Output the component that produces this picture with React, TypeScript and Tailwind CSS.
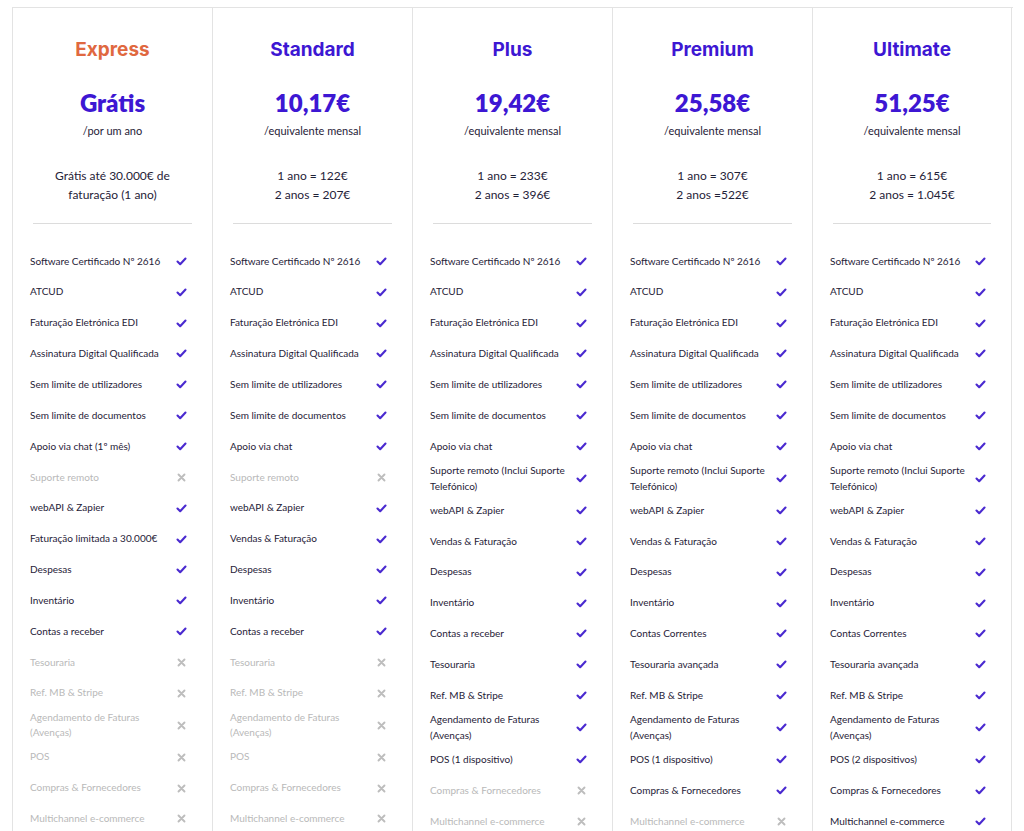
const base = [
  "Software Certificado Nº 2616",
  "ATCUD",
  "Faturação Eletrónica EDI",
  "Assinatura Digital Qualificada",
  "Sem limite de utilizadores",
  "Sem limite de documentos",
];

type Feature = [string, boolean];

const on = (names: string[]): Feature[] => names.map((n) => [n, true]);

const plans = [
  {
    name: "Express",
    orange: true,
    price: "Grátis",
    period: "/por um ano",
    lines: ["Grátis até 30.000€ de", "faturação (1 ano)"],
    features: [
      ...on(base),
      ["Apoio via chat (1º mês)", true],
      ["Suporte remoto", false],
      ["webAPI & Zapier", true],
      ["Faturação limitada a 30.000€", true],
      ["Despesas", true],
      ["Inventário", true],
      ["Contas a receber", true],
      ["Tesouraria", false],
      ["Ref. MB & Stripe", false],
      ["Agendamento de Faturas (Avenças)", false],
      ["POS", false],
      ["Compras & Fornecedores", false],
      ["Multichannel e-commerce", false],
    ] as Feature[],
  },
  {
    name: "Standard",
    price: "10,17€",
    period: "/equivalente mensal",
    lines: ["1 ano = 122€", "2 anos = 207€"],
    features: [
      ...on(base),
      ["Apoio via chat", true],
      ["Suporte remoto", false],
      ["webAPI & Zapier", true],
      ["Vendas & Faturação", true],
      ["Despesas", true],
      ["Inventário", true],
      ["Contas a receber", true],
      ["Tesouraria", false],
      ["Ref. MB & Stripe", false],
      ["Agendamento de Faturas (Avenças)", false],
      ["POS", false],
      ["Compras & Fornecedores", false],
      ["Multichannel e-commerce", false],
    ] as Feature[],
  },
  {
    name: "Plus",
    price: "19,42€",
    period: "/equivalente mensal",
    lines: ["1 ano = 233€", "2 anos = 396€"],
    features: [
      ...on(base),
      ["Apoio via chat", true],
      ["Suporte remoto (Inclui Suporte Telefónico)", true],
      ["webAPI & Zapier", true],
      ["Vendas & Faturação", true],
      ["Despesas", true],
      ["Inventário", true],
      ["Contas a receber", true],
      ["Tesouraria", true],
      ["Ref. MB & Stripe", true],
      ["Agendamento de Faturas (Avenças)", true],
      ["POS (1 dispositivo)", true],
      ["Compras & Fornecedores", false],
      ["Multichannel e-commerce", false],
    ] as Feature[],
  },
  {
    name: "Premium",
    price: "25,58€",
    period: "/equivalente mensal",
    lines: ["1 ano = 307€", "2 anos =522€"],
    features: [
      ...on(base),
      ["Apoio via chat", true],
      ["Suporte remoto (Inclui Suporte Telefónico)", true],
      ["webAPI & Zapier", true],
      ["Vendas & Faturação", true],
      ["Despesas", true],
      ["Inventário", true],
      ["Contas Correntes", true],
      ["Tesouraria avançada", true],
      ["Ref. MB & Stripe", true],
      ["Agendamento de Faturas (Avenças)", true],
      ["POS (1 dispositivo)", true],
      ["Compras & Fornecedores", true],
      ["Multichannel e-commerce", false],
    ] as Feature[],
  },
  {
    name: "Ultimate",
    price: "51,25€",
    period: "/equivalente mensal",
    lines: ["1 ano = 615€", "2 anos = 1.045€"],
    features: [
      ...on(base),
      ["Apoio via chat", true],
      ["Suporte remoto (Inclui Suporte Telefónico)", true],
      ["webAPI & Zapier", true],
      ["Vendas & Faturação", true],
      ["Despesas", true],
      ["Inventário", true],
      ["Contas Correntes", true],
      ["Tesouraria avançada", true],
      ["Ref. MB & Stripe", true],
      ["Agendamento de Faturas (Avenças)", true],
      ["POS (2 dispositivos)", true],
      ["Compras & Fornecedores", true],
      ["Multichannel e-commerce", true],
    ] as Feature[],
  },
];

function Check() {
  return (
    <svg width="11" height="9" viewBox="0 0 11 9" fill="none">
      <path d="M1.5 4.5 L4.2 7.2 L9.5 1.5" stroke="#4a2ad0" strokeWidth="2.1" strokeLinecap="round" strokeLinejoin="round" />
    </svg>
  );
}

function Cross() {
  return (
    <svg width="9" height="9" viewBox="0 0 9 9" fill="none">
      <path d="M1.5 1.5 L7.5 7.5 M7.5 1.5 L1.5 7.5" stroke="#bdbdbd" strokeWidth="1.9" strokeLinecap="round" />
    </svg>
  );
}

export default function App() {
  return (
    <div className="min-h-screen bg-white pl-[12px] pt-[7px] font-['Lato','Liberation_Sans',sans-serif]">
      <div className="flex w-[1001px] border-t border-[#e3e3e3]">
        {plans.map((plan, i) => (
          <div
            key={plan.name}
            className={`w-[200px] shrink-0 border-l border-[#e3e3e3] ${i === plans.length - 1 ? "border-r" : ""}`}
          >
            {/* header */}
            <div className="flex flex-col items-center pt-[30px] text-center">
              <h2
                className={`font-['Inter',sans-serif] text-[19px] leading-[24px] font-bold ${plan.orange ? "text-[#e0683f]" : "text-[#3d17d3]"}`}
              >
                {plan.name}
              </h2>
              <div className="mt-[26px] text-[24px] leading-[30px] font-extrabold text-[#3d17d3]">{plan.price}</div>
              <div className="mt-[5px] text-[11px] leading-[16px] text-[#1f2238]">{plan.period}</div>
              <div className="mt-[27px] text-[12px] leading-[19px] text-[#1f2238]">
                {plan.lines.map((l) => (
                  <div key={l}>{l}</div>
                ))}
              </div>
            </div>
            <div className="mx-[20px] mt-[19px] h-px bg-[#dcdcdc]" />

            {/* features */}
            <div className="mt-[22px]">
              {plan.features.map(([label, ok]) => (
                <div
                  key={label}
                  className="flex min-h-[30.85px] items-center gap-[8px] py-px pl-[17px] pr-[25px]"
                >
                  <span
                    className={`flex-1 text-[10px] leading-[15.6px] ${ok ? "text-[#1f2238]" : "text-[#b9b9b9]"}`}
                  >
                    {label}
                  </span>
                  <span className="flex w-[11px] justify-center">{ok ? <Check /> : <Cross />}</span>
                </div>
              ))}
            </div>
          </div>
        ))}
      </div>
    </div>
  );
}
